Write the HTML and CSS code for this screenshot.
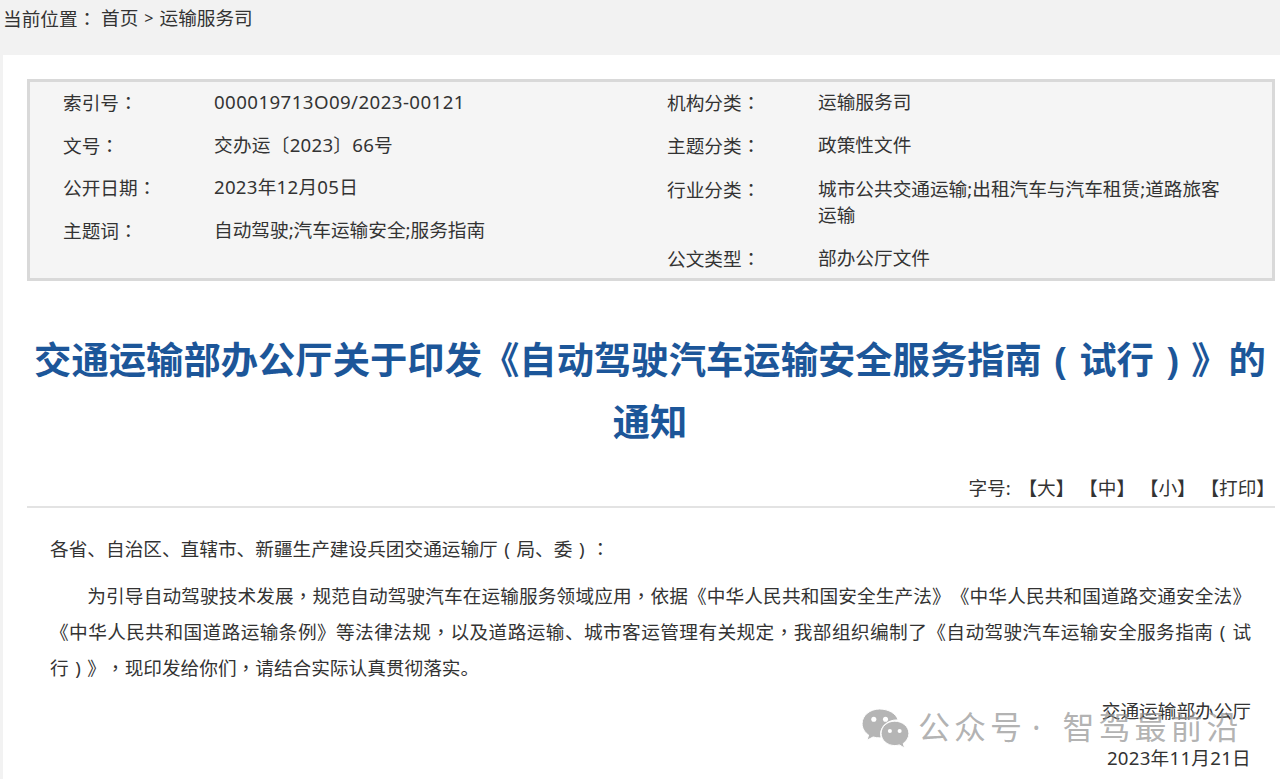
FILE: index.html
```html
<!DOCTYPE html>
<html lang="zh-CN">
<head>
<meta charset="utf-8">
<title>交通运输部办公厅关于印发《自动驾驶汽车运输安全服务指南（试行）》的通知</title>
<link rel="stylesheet" href="styles.css">
</head>
<body>
<div class="crumbs"><span class="crumb-label">当前位置<i class="mid">：</i></span><a>首页</a><span class="sep">&gt;</span><a>运输服务司</a></div>
<main class="panel">
  <section class="meta">
    <div class="meta-col">
      <div class="row"><span class="key">索引号<i class="mid">：</i></span><span class="val idx">000019713O09/2023-00121</span></div>
      <div class="row"><span class="key">文号<i class="mid">：</i></span><span class="val num">交办运〔2023〕66号</span></div>
      <div class="row"><span class="key">公开日期<i class="mid">：</i></span><span class="val num">2023年12月05日</span></div>
      <div class="row"><span class="key">主题词<i class="mid">：</i></span><span class="val">自动驾驶;汽车运输安全;服务指南</span></div>
    </div>
    <div class="meta-col right">
      <div class="row"><span class="key">机构分类<i class="mid">：</i></span><span class="val">运输服务司</span></div>
      <div class="row"><span class="key">主题分类<i class="mid">：</i></span><span class="val">政策性文件</span></div>
      <div class="row tall"><span class="key">行业分类<i class="mid">：</i></span><span class="val">城市公共交通运输;出租汽车与汽车租赁;道路旅客运输</span></div>
      <div class="row"><span class="key">公文类型<i class="mid">：</i></span><span class="val">部办公厅文件</span></div>
    </div>
  </section>
  <h1 class="title">交通运输部办公厅关于印发《自动驾驶汽车运输安全服务指南<i class="paren">(</i>试行<i class="paren">)</i>》的通知</h1>
  <div class="tools"><span class="size-label">字号:</span><a>【大】</a><a>【中】</a><a>【小】</a><a>【打印】</a></div>
  <article class="body">
    <p class="greet">各省、自治区、直辖市、新疆生产建设兵团交通运输厅<i class="paren">(</i>局、委<i class="paren">)</i><i class="mid">：</i></p>
    <p class="para">为引导自动驾驶技术发展<i class="mid">，</i>规范自动驾驶汽车在运输服务领域应用<i class="mid">，</i>依据《中华人民共和国安全生产法》《中华人民共和国道路交通安全法》《中华人民共和国道路运输条例》等法律法规<i class="mid">，</i>以及道路运输、城市客运管理有关规定<i class="mid">，</i>我部组织编制了《自动驾驶汽车运输安全服务指南<i class="paren">(</i>试<span class="nb">行<i class="paren">)</i>》<i class="mid">，</i></span>现印发给你们<i class="mid">，</i>请结合实际认真贯彻落实。</p>
    <p class="sign">交通运输部办公厅</p>
    <p class="sign date num">2023年11月21日</p>
  </article>
</main>
<div class="watermark">
  <svg class="wx" viewBox="0 0 48 40" width="47" height="39" aria-hidden="true">
    <path class="wx-a" d="M18 0C8 0 0 6.700 0 15c0 4.800 2.600 8.900 6.700 11.700L5 32l6.300-3.300c2.100.6 4.300.9 6.700.9.500 0 1.100 0 1.600-.1-.4-1.300-.6-2.600-.6-4 0-8 7.500-14.300 16.800-14.300h1.100C35 4.800 27.200 0 18 0z"/>
    <circle class="wx-e" cx="12" cy="10.500" r="2.600"/><circle class="wx-e" cx="24" cy="10.500" r="2.600"/>
    <path class="wx-a" d="M48 25c0-6.900-6.700-12.500-14.500-12.500S19.500 18.100 19.500 25s6.200 12.500 14 12.500c1.600 0 3.200-.2 4.700-.7L43.500 40l-1.300-4.700C45.800 32.800 48 29.100 48 25z"/>
    <circle class="wx-e" cx="28.500" cy="22.500" r="2.100"/><circle class="wx-e" cx="38.500" cy="22.500" r="2.100"/>
  </svg>
  <span class="wm-text">公众号<span class="wm-dot">·</span>智驾最前沿</span>
</div>
</body>
</html>
```
FILE: styles.css
```css
* { box-sizing: border-box; }
html, body { margin: 0; height: 779px; overflow: hidden; }
body {
  position: relative;
  background: #f2f2f2;
  color: #333;
  font-family: "Noto Sans", "Noto Sans CJK SC", sans-serif;
  font-size: 18.67px;
  text-spacing-trim: space-all;
}
p { margin: 0; }
.mid { font-style: normal; font-family: "Noto Sans CJK TC", sans-serif; font-feature-settings: "locl" 0; }
.paren { font-style: normal; display: inline-block; width: 1em; text-align: center; text-indent: 0; line-height: 1; }
.nb { white-space: nowrap; }
.crumbs { height: 55px; padding: 4px 0 0 3px; line-height: 28px; display: flex; }
.crumb-label { width: 98px; }
.sep { margin: 0 6px; font-size: 16px; }
.panel { background: #fff; margin-left: 3px; height: 724px; padding: 24px 5px 0 24px; }
.meta {
  height: 202px;
  background: #f5f5f5;
  border: 3px solid #d9d9d9;
  display: flex;
  padding: 6px 0 0 33px;
}
.meta-col { width: 604px; }
.meta-col.right { width: 570px; }
.row { display: flex; height: 42.700px; line-height: 28px; }
.row.tall { height: 70.500px; line-height: 26px; padding-top: 2.500px; }
.key { width: 151px; flex: none; }
.val { flex: 1; }
.idx { letter-spacing: .43px; }
.num { letter-spacing: .25px; }
.right .val { padding-right: 10px; }
.title {
  margin: 0;
  padding: 48px 2px 0 0;
  font-size: 37.330px;
  line-height: 62px;
  font-weight: 700;
  color: #1c5699;
  text-align: center;
}
.tools {
  margin-top: 20px;
  height: 35px;
  border-bottom: 2px solid #e3e3e3;
  display: flex;
  justify-content: flex-end;
  gap: 4.700px;
  line-height: 30px;
  color: #333;
}
.size-label { margin-right: 3px; }
.body { padding: 22px 24px 0 23px; }
.greet { line-height: 36px; }
.para { margin-top: 10px; text-indent: 2em; line-height: 35px; text-align: justify; }
.sign { text-align: right; line-height: 36px; margin-top: 8px; }
.sign.date { margin-top: 11px; }
.watermark {
  position: absolute;
  left: 862px;
  top: 705px;
  display: flex;
  align-items: center;
  gap: 9px;
  color: rgba(150,150,150,.72);
  pointer-events: none;
}
.wx-a { fill: #b5b5b5; stroke: #fff; stroke-width: 1; }
.wx-e { fill: #fff; }
.wm-text { font-size: 32px; line-height: 44px; white-space: nowrap; letter-spacing: 4px; margin-bottom: 2px; }
.wm-dot { margin: 0 18px 0 6px; }
```
